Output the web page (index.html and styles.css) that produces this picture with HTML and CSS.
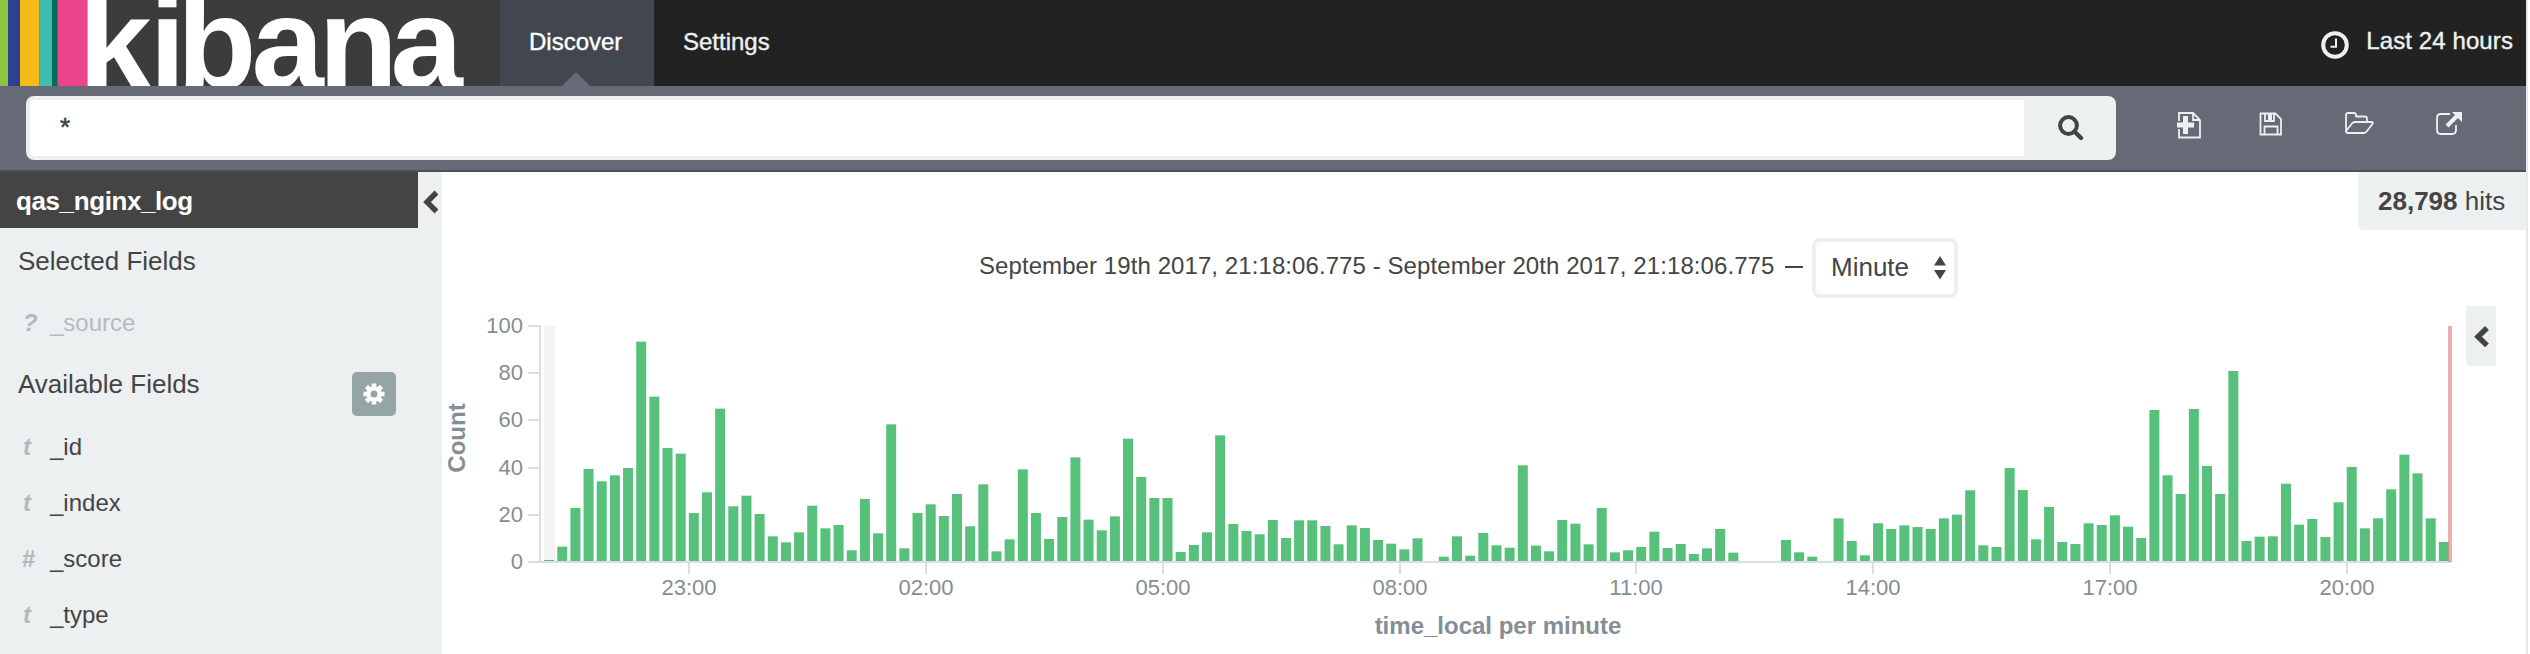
FILE: index.html
```html
<!DOCTYPE html>
<html lang="en">
<head>
<meta charset="utf-8">
<title>Discover - Kibana</title>
<link rel="stylesheet" href="styles.css">
</head>
<body>
<div class="app">
  <header class="topbar">
    <svg class="logo" width="500" height="86" viewBox="0 0 500 86">
      <rect width="500" height="86" fill="#3c3c3c"/>
      <rect width="8" height="86" fill="#8ac640"/>
      <rect x="8" width="12" height="86" fill="#2c4290"/>
      <rect x="20" width="19.500" height="86" fill="#f3ba1b"/>
      <rect x="39.500" width="12.500" height="86" fill="#3ebeb0"/>
      <rect x="52" width="5.500" height="86" fill="#006b5b"/>
      <rect x="57.500" width="30" height="86" fill="#ea458b"/>
      <rect x="87.500" width="10" height="86" fill="#fff"/>
      <text class="logo-text" y="88" x="79.500 149.500 177 251.500 318.500 390.500">kibana</text>
    </svg>
    <nav class="tabs">
      <a class="tab active">Discover</a>
      <a class="tab">Settings</a>
    </nav>
    <div class="timepicker">
      <svg width="28" height="28" viewBox="0 0 28 28" fill="none" stroke="#ecf0f1"><circle cx="14" cy="14" r="11.800" stroke-width="4"/><path d="M15 7.500v8.200H9.500" stroke-width="2"/></svg>
      <span>Last 24 hours</span>
    </div>
  </header>

  <div class="querybar">
    <div class="search">
      <div class="search-input">*</div>
      <div class="search-button">
        <svg width="26" height="26" viewBox="0 0 26 26" fill="none" stroke="#444"><circle cx="10.500" cy="10.500" r="8.400" stroke-width="4"/><path d="M16.500 16.500l6.500 6.500" stroke-width="4.400" stroke-linecap="round"/></svg>
      </div>
    </div>
    <div class="actions">
      <svg width="26" height="28" viewBox="0 0 26 28" fill="none" stroke="#ecf0f1" stroke-width="1.800"><path d="M3 10V2h14l7 7v17.500H3V18"/><path d="M17 2v7h7"/><path d="M9.500 5v18M1 14h17" stroke-width="5"/></svg>
      <svg width="24" height="24" viewBox="0 0 24 24" fill="none" stroke="#ecf0f1" stroke-width="1.800"><path d="M1.500 1.500h15L22 7v15.500H1.500z"/><path d="M5.500 22v-7.500h13V22M6 2v7h9V2"/><path d="M9 2h4v6H9z" fill="#ecf0f1" stroke="none"/></svg>
      <svg width="30" height="22" viewBox="0 0 30 22" fill="none" stroke="#ecf0f1" stroke-width="1.800" stroke-linejoin="round"><path d="M2 19V3q0-2 2-2h6q2 0 2 2v1.500h9q2 0 2 2V10M2 19l6-7.500q1-1.500 3-1.500h17q1.500.5.5 2l-5.500 7q-1.500 2-3 2H4Q2 21 2 19z"/></svg>
      <svg width="28" height="26" viewBox="0 0 28 26" fill="none" stroke="#ecf0f1"><path d="M15 3H6Q2 3 2 7v12q0 4 4 4h11q4 0 4-4v-5" stroke-width="1.800"/><path d="M12 15L23 4" stroke-width="4"/><path d="M17 1h10v10z" fill="#ecf0f1" stroke="none"/></svg>
    </div>
  </div>

  <main class="content">
    <aside class="sidebar">
      <div class="index-row">
        <div class="index-name">qas_nginx_log</div>
        <svg width="24" height="56" viewBox="0 0 24 56" fill="none" stroke="#444" stroke-width="5.400"><path d="M18.500 20.500L9 30l9.500 9.500"/></svg>
      </div>
      <h2 class="group">Selected Fields</h2>
      <div class="field muted"><i>?</i>_source</div>
      <div class="group-row">
        <h2 class="group">Available Fields</h2>
        <div class="gear">
          <svg width="22" height="22" viewBox="-11 -11 22 22" fill="none" stroke="#fff"><circle r="5.600" stroke-width="4.200"/><path stroke-width="4.600" d="M0-6.500v-4M0 6.500v4M-6.500 0h-4M6.500 0h4M-4.900-4.900l-2.600-2.600M4.900-4.900l2.600-2.600M-4.900 4.900l-2.600 2.600M4.900 4.900l2.600 2.600"/></svg>
        </div>
      </div>
      <div class="field"><i>t</i>_id</div>
      <div class="field"><i>t</i>_index</div>
      <div class="field"><i class="hash">#</i>_score</div>
      <div class="field"><i>t</i>_type</div>
    </aside>

    <section class="results">
      <div class="hits-row"><div class="hits"><b>28,798</b> hits</div></div>
      <div class="range-row">
        <span class="range">September 19th 2017, 21:18:06.775 - September 20th 2017, 21:18:06.775</span>
        <span class="dash"></span>
        <div class="interval">Minute
          <svg width="12" height="24" viewBox="0 0 12 24" fill="#444"><path d="M0 9.500L6 0l6 9.500zM0 14h12l-6 9.500z"/></svg>
        </div>
      </div>
      <div class="chart-row">
        <svg id="chart" width="2020" height="354" viewBox="442 300 2020 354"></svg>
        <div class="collapse">
          <svg width="30" height="60" viewBox="0 0 30 60" fill="none" stroke="#444" stroke-width="5.400"><path d="M21 22l-9 8.700 9 8.700"/></svg>
        </div>
      </div>
    </section>
  </main>
</div>
<script src="chart.js"></script>
</body>
</html>
```

FILE: styles.css
```css
* { box-sizing: border-box; }
body {
  margin: 0;
  background: #fff;
  color: #444;
  font: 24px/30px "Liberation Sans", Arial, sans-serif;
}
svg { display: block; flex: none; }
.app {
  width: 2528px;
  height: 654px;
  overflow: hidden;
  border-right: 2px solid #e6e7e8;
}
.topbar { display: flex; height: 86px; background: #222; }
.logo-text { font: bold 130px "Liberation Sans", Arial, sans-serif; fill: #fff; }
.tabs { display: flex; flex: 1; }
.tab { height: 86px; padding: 27px 29px 0; color: #ecf0f1; -webkit-text-stroke: 0.4px; }
.tab.active { position: relative; width: 154px; background: #42464e; color: #fff; }
.tab.active::after {
  content: "";
  position: absolute;
  left: 62px;
  bottom: 0;
  border: 14px solid transparent;
  border-top: 0;
  border-bottom-color: #656a76;
}
.timepicker {
  display: flex;
  gap: 16px;
  padding: 26px 13px 0 0;
  color: #ecf0f1;
  letter-spacing: 0.1px;
  -webkit-text-stroke: 0.4px;
}
.timepicker svg { margin: 5px 1px 0 0; }
.querybar {
  display: flex;
  height: 86px;
  padding: 10px 62px 0 26px;
  background: #656a76;
  border-bottom: 2px solid #4b505c;
}
.search {
  display: flex;
  width: 2090px;
  height: 64px;
  padding: 4px 0 4px 4px;
  border-radius: 8px;
  background: #ecf0f1;
}
.search-input { width: 1994px; padding: 12px 30px; background: #fff; border-radius: 4px 0 0 4px; font-size: 26px; -webkit-text-stroke: 0.6px; }
.search-button { padding: 15px 0 0 34px; }
.actions { display: flex; gap: 61px; padding: 15px 0 0 60px; }
.actions svg { margin-top: 1px; }
.actions svg:nth-child(2) { margin-left: -4px; }
.actions svg:first-child, .actions svg:last-child { margin-top: 0; }
.content { display: flex; height: 482px; }
.sidebar { width: 442px; background: #ecf0f1; }
.index-row { display: flex; height: 56px; }
.index-name {
  width: 418px;
  padding: 14px 0 0 16px;
  background: #444;
  color: #fff;
  font-size: 26px;
  font-weight: bold;
  letter-spacing: -0.4px;
}
.group { margin: 0; padding: 18px 0 0 18px; font-size: 26px; font-weight: normal; line-height: 30px; }
.index-row + .group { height: 68px; }
.group-row { display: flex; justify-content: space-between; height: 68px; padding-right: 46px; }
.group-row .group { padding-top: 17px; }
.gear { display: grid; place-items: center; width: 44px; height: 44px; margin-top: 20px; border-radius: 5px; background: #95a5a6; }
.field { display: flex; height: 56px; padding: 12px 0 0 22px; line-height: 30px; }
.field i { width: 28px; padding-left: 1px; color: #b2b9bc; font-weight: bold; }
.field .hash { padding-left: 0; font-style: normal; }
.muted { color: #b4bbbe; }
.results { flex: 1; }
.hits-row { display: flex; justify-content: flex-end; height: 58px; }
.hits { height: 58px; width: 168px; padding: 14px 0 0 20px; background: #ecf0f1; border-radius: 0 0 0 6px; font-size: 26px; white-space: nowrap; }
.range-row { display: flex; height: 76px; padding: 8px 0 0 537px; }
.range { width: 797px; padding-top: 13px; white-space: nowrap; letter-spacing: 0.08px; }
.dash { width: 18px; height: 2px; margin: 28px 9px 0; background: #444; }
.interval {
  display: flex;
  justify-content: space-between;
  width: 146px;
  height: 60px;
  padding: 10px 8px 0 15px;
  border: 4px solid #ecf0f1;
  border-radius: 8px;
  font-size: 26px;
}
.interval svg { margin-top: 4px; }
.chart-row { display: flex; height: 348px; margin-top: -6px; }
.collapse { width: 30px; height: 60px; margin: 6px 0 0 4px; background: #ecf0f1; border-radius: 0 0 0 6px; }
.axis { fill: #ddd; }
.bar { fill: #57c17b; }
.tick { font-size: 22px; fill: #848e96; }
.title { font-size: 24px; font-weight: bold; fill: #848e96; text-anchor: middle; }
.middle { text-anchor: middle; }
.end { text-anchor: end; }
```

FILE: chart.js
```js
const chart = document.getElementById('chart');
const NS = 'http://www.w3.org/2000/svg';

function add(name, attrs, text) {
  const el = document.createElementNS(NS, name);
  for (const key in attrs) el.setAttribute(key, attrs[key]);
  if (text) el.textContent = text;
  chart.appendChild(el);
}

// Bar heights in thirds of a pixel, one per ten-minute bucket.
const heights = [
  3, 43, 159, 276, 239, 257, 279, 658, 493, 339, 322, 144, 206, 457, 164, 196, 141, 74, 56, 86,
  166, 98, 108, 32, 186, 83, 410, 38, 144, 170, 135, 201, 104, 230, 29, 65, 275, 144, 66, 132,
  311, 124, 92, 134, 367, 252, 189, 189, 27, 48, 86, 377, 111, 90, 80, 123, 69, 122, 122, 105,
  50, 107, 99, 63, 52, 35, 68, 0, 13, 74, 16, 84, 47, 40, 287, 46, 29, 123, 112, 50,
  159, 26, 32, 42, 88, 39, 51, 21, 38, 96, 25, 0, 0, 0, 63, 26, 13, 0, 128, 60,
  17, 113, 96, 107, 102, 96, 128, 139, 212, 47, 42, 279, 213, 65, 162, 57, 51, 113, 108, 137,
  103, 69, 453, 257, 201, 456, 285, 201, 570, 60, 73, 74, 232, 109, 126, 72, 176, 282, 98, 128,
  215, 319, 263, 128, 57
];

const LEFT = 544.1;
const STEP = 13.158;
const BASE = 561;

add('rect', { x: 544, y: 326, width: 11, height: 235, fill: '#f3f3f3' });
heights.forEach((h, i) => {
  if (h) add('rect', { class: 'bar', x: LEFT + i * STEP, y: BASE - h / 3, width: 10, height: h / 3 });
});

add('rect', { class: 'axis', x: 539, y: 325, width: 2, height: 238 });
add('rect', { class: 'axis', x: 539, y: 561, width: 1912, height: 2 });
[[100, 325], [80, 372], [60, 419], [40, 467], [20, 514], [0, 561]].forEach(([value, y]) => {
  add('rect', { class: 'axis', x: 528, y, width: 12, height: 2 });
  add('text', { class: 'tick end', x: 523, y: y + 8 }, String(value));
});
['23:00', '02:00', '05:00', '08:00', '11:00', '14:00', '17:00', '20:00'].forEach((label, i) => {
  const x = Math.round(689 + i * 236.85);
  add('rect', { class: 'axis', x: x - 1, y: 563, width: 2, height: 11 });
  add('text', { class: 'tick middle', x, y: 595 }, label);
});
add('text', { class: 'title', x: 1498, y: 634 }, 'time_local per minute');
add('text', { class: 'title', transform: 'translate(465 438) rotate(-90)' }, 'Count');
add('rect', { x: 2448, y: 326, width: 4, height: 236, fill: '#e0787d', opacity: 0.6 });
```
